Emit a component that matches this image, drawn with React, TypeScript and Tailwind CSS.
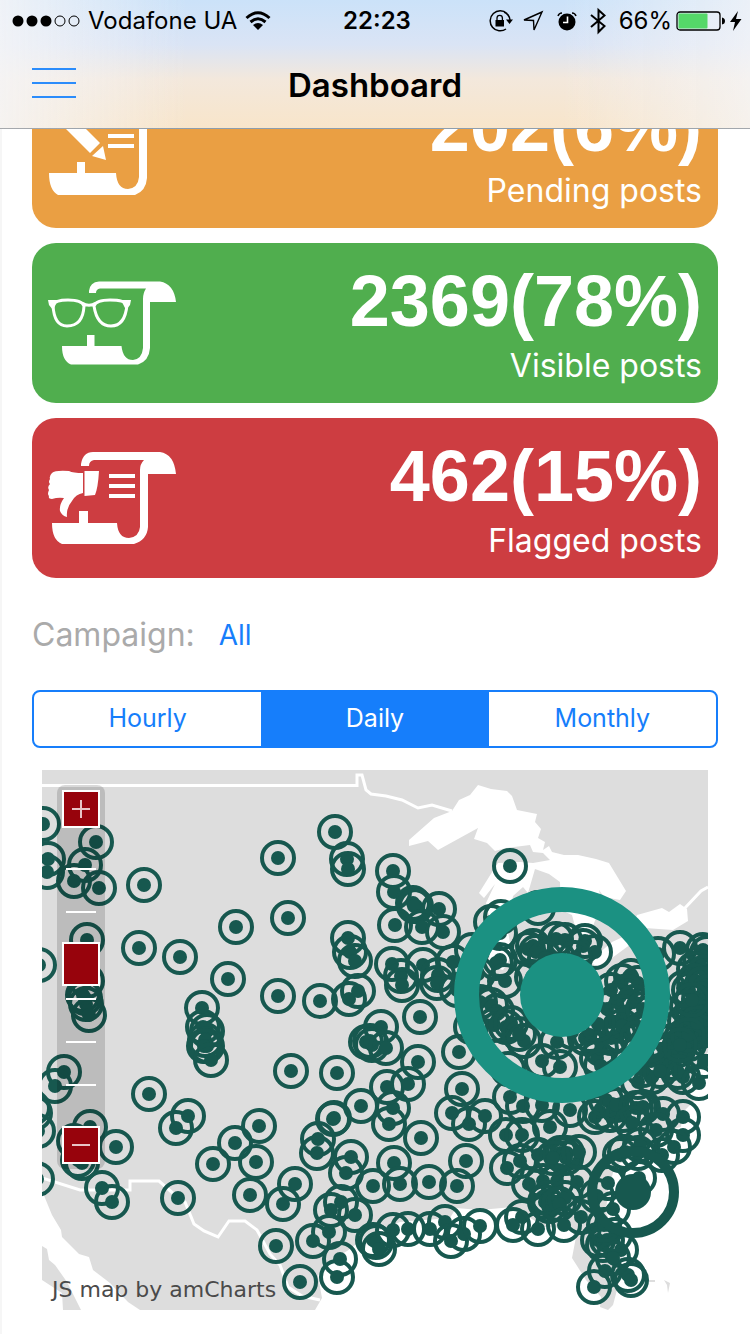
import { useState, type ReactNode } from 'react';

type Point = [number, number];

const WEST: Point[] = [
  [43, 824], [96, 842], [85, 865], [48, 859], [47, 872], [74, 881], [99, 888], [144, 885],
  [87, 940], [139, 948], [180, 957], [236, 927], [228, 979], [39, 965], [202, 1008], [203, 1027],
  [207, 1031], [205, 1040], [207, 1046], [204, 1046], [211, 1060], [87, 981], [83, 995], [86, 1004],
  [85, 998], [89, 1015], [64, 1072], [55, 1086], [33, 1108], [35, 1113], [38, 1131], [37, 1179],
  [90, 1127], [74, 1141], [82, 1163], [78, 1160], [116, 1147], [102, 1188], [112, 1202], [149, 1094],
  [188, 1116], [176, 1128], [178, 1198], [213, 1164], [235, 1143], [259, 1126], [256, 1162],
  [250, 1195], [276, 1246],
];

const CENTRAL: Point[] = [
  [278, 858], [335, 832], [347, 859], [348, 869], [288, 918], [393, 871], [394, 892], [413, 903],
  [416, 906], [414, 906], [439, 909], [395, 925], [422, 927], [443, 932], [348, 938], [350, 952],
  [355, 961], [278, 996], [320, 1001], [349, 999], [358, 991], [392, 964], [401, 976], [402, 985],
  [423, 965], [438, 975], [437, 983], [453, 962], [472, 950], [457, 990], [420, 1017],
  [381, 1027], [366, 1042], [372, 1045], [370, 1041], [386, 1048], [291, 1071], [337, 1073],
  [361, 1106], [333, 1119], [334, 1118], [318, 1139], [317, 1153], [351, 1157], [346, 1173],
  [295, 1184], [283, 1204], [373, 1186], [394, 1163], [400, 1184], [429, 1182], [457, 1186],
  [466, 1161], [341, 1202], [331, 1210], [355, 1215], [329, 1232], [313, 1241],
  [340, 1259], [337, 1277], [300, 1282], [373, 1240], [376, 1242], [379, 1249], [393, 1230],
  [408, 1229], [430, 1229], [445, 1222], [451, 1241], [464, 1234], [480, 1226], [421, 1138],
  [389, 1124], [393, 1108], [387, 1087], [408, 1084], [418, 1062], [459, 1052], [462, 1089],
  [452, 1113], [469, 1124], [485, 1116],
];

const LAKES: Point[] = [
  [510, 866], [501, 917], [491, 922], [538, 908], [500, 933], [528, 949], [533, 946],
  [536, 952], [556, 939], [565, 940], [585, 941], [583, 946], [595, 952],
  [575, 958], [545, 958], [500, 960], [496, 963], [505, 981], [478, 974], [532, 977],
  [480, 1002], [491, 1005], [497, 1011], [506, 1027], [494, 1025], [511, 1023], [524, 1041],
  [519, 1034], [542, 1061], [560, 1067], [557, 1042], [585, 1038], [572, 1032], [508, 1069],
  [597, 1058], [601, 1049], [590, 1035], [611, 1038], [619, 1035], [601, 1066],
  [611, 990], [622, 981], [631, 976], [638, 983], [627, 992], [616, 1001], [634, 1002],
  [607, 1009], [623, 1012], [610, 1022], [633, 1021], [622, 1026], [598, 1024], [643, 1009],
  [644, 1028], [471, 1027], [637, 1038],
];

const NORTHEAST: Point[] = [
  [680, 948], [658, 954], [703, 950], [707, 953], [683, 988], [689, 990], [700, 963], [694, 969],
  [705, 972], [694, 981], [702, 984], [708, 992], [699, 999], [687, 1007], [706, 1006], [693, 1014],
  [701, 1018], [685, 1021], [708, 1024], [677, 1028], [690, 1029], [699, 1032], [681, 1038],
  [672, 1041], [706, 1040], [689, 1044], [678, 1050], [668, 1052], [685, 1056], [661, 1060],
  [672, 1063], [651, 1061], [652, 1077], [638, 1082], [643, 1070], [683, 1077], [678, 1072],
  [699, 1083], [660, 1071], [650, 1045], [704, 1061], [697, 1023], [692, 1000], [688, 1035],
  [680, 1045],
];

const SOUTHEAST: Point[] = [
  [510, 1097], [523, 1106], [542, 1105], [570, 1110], [506, 1135], [522, 1135], [550, 1127],
  [507, 1168], [520, 1161], [538, 1155], [529, 1184], [543, 1181], [557, 1181], [577, 1182],
  [560, 1153], [563, 1154], [567, 1153], [566, 1158], [553, 1158], [579, 1152], [545, 1202],
  [549, 1206], [548, 1198], [565, 1198], [559, 1204], [581, 1217], [564, 1225], [538, 1229],
  [522, 1217], [513, 1225], [595, 1117], [600, 1112], [610, 1115], [606, 1100],
  [623, 1115], [616, 1105], [636, 1108], [640, 1108], [643, 1107], [632, 1123],
  [663, 1114], [683, 1117], [683, 1135], [656, 1130], [674, 1147], [662, 1155],
  [625, 1152], [620, 1155], [640, 1145], [638, 1153], [608, 1183],
  [613, 1209], [639, 1178], [598, 1240], [603, 1245], [607, 1240], [621, 1250], [605, 1271],
  [594, 1287], [628, 1275], [631, 1280], [615, 1235], [613, 1258],
  [604, 1225], [597, 1196],
];

const MARKERS: Point[] = [...WEST, ...CENTRAL, ...LAKES, ...NORTHEAST, ...SOUTHEAST];

function PendingIcon() {
  return (
    <svg viewBox="0 0 128 128" className="size-32 shrink-0 fill-white" aria-hidden="true">
      <path d="M31 32 V30 Q33 18 43 18 H112 Q126 20 128 40 H99 V94 Q98 107 87 111 H10 Q1 106 1 89 H29 V78 H37 V89 H68 Q69 105 80 105 Q90 104 91 93 V36 Q91 30 95 26 H44 Q39 27 39 32 Z" />
      <path d="M60 40h26v4H60zM60 50h26v4H60zM60 60h26v4H60zM8 35 L18 25 L52 59 L42 69 ZM55 62 L44 72 L58 76 Z" />
    </svg>
  );
}

function VisibleIcon() {
  return (
    <svg viewBox="0 0 128 128" className="size-32 shrink-0 fill-white" aria-hidden="true">
      <path d="M41 34 V32 Q42 23 51 22.5 H112 Q126 25 128 43 H102 V89 Q101 102 90 105.5 H23 Q14 102 14 87 H39 V76 H46.500 V87 H73.500 Q75 101 85 101 Q94 100 95 89 V40 Q95 34 98 29.500 H52 Q48 30 48 34 Z" />
      <path
        d="M5 46 Q7 41 20 41 Q34 41 36 47 Q35 67 19 67 Q6 67 5 46 ZM46 47 Q48 41 62 41 Q77 41 79 46 Q77 67 63 67 Q49 67 46 47 ZM34 44 Q41 48.500 48 44"
        className="fill-none stroke-white stroke-3"
      />
      <path d="M0 41 H10 L5 51 L1 46 ZM83 41 H73 L78 51 L82 46 Z" />
    </svg>
  );
}

function FlaggedIcon() {
  return (
    <svg viewBox="0 0 128 128" className="size-32 shrink-0 fill-white" aria-hidden="true">
      <path d="M33 32 V30 Q35 18 45 18 H112 Q126 20 128 40 H100 V93 Q99 106 86 110 H14 Q4 106 4 89 H31 V77 H40 V89 H69 Q70 104 81 104 Q91 103 92 93 V36 Q92 30 96 26 H46 Q41 27 41 32 Z" />
      <path d="M61 40h26v4H61zM61 50h26v4H61zM61 60h26v4H61zM36.500 37 H51 Q50 54 47 61 L36.500 62 Z" />
      <path d="M35 39 Q25 39 21 37 Q7 36 4 39 Q1 42 2 45 Q0 48 2 50 Q-1 53 1 56 Q-1 60 1 62 Q0 65 4 65 Q10 63 16 64 Q11 71 12 77 Q14 82 19 83 Q18 74 24 67 Q28 60 35 59 Z" />
    </svg>
  );
}

interface StatProps {
  tone: string;
  icon: ReactNode;
  value: string;
  label: string;
}

function StatCard({ tone, icon, value, label }: StatProps) {
  return (
    <section className={`flex h-40 items-start justify-between rounded-3xl px-4 pt-4 text-white ${tone}`}>
      {icon}
      <div className="text-right">
        <p className="font-['Liberation_Sans',Arial,sans-serif] text-[72px] leading-[84px] font-bold">{value}</p>
        <p className="text-[32px] leading-[46px]">{label}</p>
      </div>
    </section>
  );
}

function StatusBar() {
  return (
    <div className="grid h-[42px] grid-cols-[1fr_auto_1fr] items-center pr-2 pl-3 text-2xl">
      <div className="flex items-center gap-2">
        <svg viewBox="0 0 68 12" className="h-3 w-[68px]" aria-hidden="true">
          <circle cx="6" cy="6" r="5.500" />
          <circle cx="20" cy="6" r="5.500" />
          <circle cx="34" cy="6" r="5.500" />
          <circle cx="48" cy="6" r="5" fill="none" stroke="black" />
          <circle cx="62" cy="6" r="5" fill="none" stroke="black" />
        </svg>
        <span>Vodafone UA</span>
        <svg viewBox="0 0 26 20" className="h-5 w-[26px]" aria-hidden="true">
          <path d="M1.500 7 Q13 -3.500 24.500 7 M5.500 11 Q13 4.500 20.500 11" fill="none" stroke="black" strokeWidth="3" />
          <path d="M13 19 L8 14 Q13 10 18 14 Z" />
        </svg>
      </div>
      <time className="font-semibold">22:23</time>
      <div className="flex items-center justify-end gap-2">
        <svg viewBox="0 0 24 22" className="h-[22px] w-6" aria-hidden="true">
          <path d="M18 3.500 A10 10 0 1 0 17 19 M15 2 A10 10 0 0 1 21 10" fill="none" stroke="black" strokeWidth="1.500" />
          <path d="M17 9.500 H24 L20.500 14 ZM6.500 10 h8.500 v6.500 h-8.500 z" />
          <path d="M8 10 V8 a2.700 2.700 0 0 1 5.400 0 V10" fill="none" stroke="black" strokeWidth="1.300" />
        </svg>
        <svg viewBox="0 0 24 22" className="h-[22px] w-6" aria-hidden="true">
          <path d="M3 10 L21 2 L13 20 L12.500 10.500 Z" fill="none" stroke="black" strokeWidth="1.400" />
        </svg>
        <svg viewBox="0 0 20 20" className="ml-1 size-5" aria-hidden="true">
          <circle cx="10" cy="11" r="8.500" />
          <path d="M1 5 Q2 2 5 2 M15 2 Q18 2 19 5" fill="none" stroke="black" strokeWidth="1.500" />
          <path d="M10.500 5.500 V11.500 H6" fill="none" stroke="white" strokeWidth="1.600" />
        </svg>
        <svg viewBox="0 0 18 28" className="ml-1 h-7 w-[18px]" aria-hidden="true">
          <path d="M2 8 L15.500 19 L9.500 25 V3 L15.500 8.500 L2 20" fill="none" stroke="black" strokeWidth="2" />
        </svg>
        <span className="ml-1">66%</span>
        <svg viewBox="0 0 66 22" className="-ml-1 h-[22px] w-[66px]" aria-hidden="true">
          <rect x="1" y="2" width="43" height="18" rx="3" fill="none" stroke="black" strokeWidth="1.300" />
          <rect x="2.500" y="3.500" width="29" height="15" rx="1" fill="#55d869" />
          <path d="M46 7.500 Q49 8 49 11 Q49 14 46 14.500 ZM62 1 L54 12 H59 L57 21 L65.500 9 H60 Z" />
        </svg>
      </div>
    </div>
  );
}

function ZoomPanel() {
  const [zoom, setZoom] = useState(45);
  const box = 'flex size-[38px] items-center justify-center border-2 border-white bg-[#97030c]';
  return (
    <div className="absolute top-[15px] left-[15px] flex w-12 flex-col items-center rounded-lg bg-black/15 py-[5px]">
      <button type="button" aria-label="Zoom in" className={box} onClick={() => setZoom(Math.max(0, zoom - 10))}>
        <svg viewBox="0 0 18 18" className="size-[18px] stroke-[#e8c4c6] stroke-2" aria-hidden="true">
          <path d="M9 0v18M0 9h18" />
        </svg>
      </button>
      <div className="relative h-[298px] w-[38px]">
        <div className="absolute inset-x-1 top-10 flex h-[218px] flex-col justify-between">
          {[0, 1, 2, 3, 4, 5].map((tick) => (
            <span key={tick} className="h-[2px] bg-white" />
          ))}
        </div>
        <input
          type="range"
          aria-label="Map zoom"
          min={0}
          max={100}
          value={zoom}
          onChange={(event) => setZoom(Number(event.target.value))}
          className="relative block h-full w-[38px] appearance-none bg-transparent [writing-mode:vertical-lr] [&::-webkit-slider-thumb]:h-11 [&::-webkit-slider-thumb]:w-[38px] [&::-webkit-slider-thumb]:appearance-none [&::-webkit-slider-thumb]:border-2 [&::-webkit-slider-thumb]:border-solid [&::-webkit-slider-thumb]:border-white [&::-webkit-slider-thumb]:bg-[#97030c]"
        />
      </div>
      <button type="button" aria-label="Zoom out" className={box} onClick={() => setZoom(Math.min(100, zoom + 10))}>
        <svg viewBox="0 0 18 18" className="size-[18px] stroke-[#e8c4c6] stroke-2" aria-hidden="true">
          <path d="M0 9h18" />
        </svg>
      </button>
    </div>
  );
}

function PostMap() {
  return (
    <div className="relative mx-[10px] mt-[22px]">
      <svg viewBox="42 770 666 540" className="block w-full" role="img" aria-label="Map of posts">
        <rect x="42" y="770" width="666" height="540" fill="#ddd" />
        <g fill="white">
          <path d="M409 846 V840 L434 818 L452 811 L459 800 L470 795 L478 785 L491 789 L507 791 L512 796 L517 810 L537 814 L535 822 L541 829 L538 838 L545 842 L543 850 L549 846 L552 852 L564 855 L578 855 L596 859 L609 863 L626 891 L620 900 L604 897 L599 890 L602 904 L592 928 L586 936 L577 934 L572 915 L561 910 L560 882 L549 874 L535 869 L528 893 L523 887 L513 896 L507 925 L512 955 L503 970 L489 966 L491 925 L486 903 L495 884 L484 898 L479 893 L494 869 L498 863 L520 862 L533 863 L550 860 L543 853 L533 852 L530 845 L506 848 L495 851 L487 843 L474 839 L478 828 L438 850 L428 841 Z" />
          <path d="M637 915 L662 908 L669 912 L680 904 L687 909 L688 921 L673 930 L645 928 L631 944 L612 958 L598 966 L592 964 L598 954 L612 942 L625 936 L632 928 Z" />
          <path d="M708 1052 L692 1078 L688 1098 L694 1101 L683 1112 L681 1127 L667 1131 L646 1148 L637 1155 L615 1166 L608 1190 L606 1212 L622 1252 L621 1275 L613 1305 L608 1310 L600 1307 L601 1297 L586 1280 L572 1258 L576 1237 L568 1228 L545 1227 L512 1207 L480 1210 L456 1208 L450 1218 L400 1222 L370 1234 L347 1251 L324 1264 L318 1276 L322 1298 L315 1310 H708 Z" />
          <path d="M42 1190 L45 1198 L52 1215 L61 1230 L62 1237 L79 1254 L89 1257 L93 1270 L110 1283 L128 1302 L140 1310 H81 L67 1282 L55 1265 L49 1260 L47 1249 L42 1246 ZM42 1280 L62 1293 L63 1310 H42 Z" />
        </g>
        <path d="M649 1280h6v2h-6zM664 1280 L670 1283 L668 1293 L667 1285 Z" fill="#ddd" />
        <path
          d="M42 785.500 H357 V775 H362 L366 790 L371 794 L386 796 L402 800 L418 808 L432 805 L452 811 M42 1178 L80 1190 H130 V1181 H159 L175 1195 L185 1202 L194 1224 L204 1231 L218 1237 L229 1221 H245 L257 1230 L270 1254 L280 1265 L288 1287 L302 1296 L320 1300 M684 909 L701 891 L708 887"
          fill="none"
          stroke="white"
          strokeWidth="3"
        />
        <g>
          {MARKERS.map(([x, y], index) => (
            <g key={index}>
              <circle cx={x} cy={y} r="16" fill="none" stroke="#17584f" strokeWidth="4" />
              <circle cx={x} cy={y} r="7" fill="#17584f" />
            </g>
          ))}
        </g>
        <circle cx="633" cy="1192" r="41" fill="none" stroke="#17584f" strokeWidth="10" />
        <circle cx="633" cy="1192" r="18" fill="#17584f" />
        <circle cx="562" cy="995" r="95.500" fill="none" stroke="#1b9182" strokeWidth="25" />
        <circle cx="562" cy="995" r="42" fill="#1b9182" />
      </svg>
      <ZoomPanel />
      <a
        href="#amcharts"
        className="absolute bottom-1 left-[10px] font-['DejaVu_Sans',Verdana,sans-serif] text-[22px] leading-8 text-[#4a4a4a]"
      >
        JS map by amCharts
      </a>
    </div>
  );
}

const PERIODS = ['Hourly', 'Daily', 'Monthly'];

export default function App() {
  const [period, setPeriod] = useState('Daily');
  return (
    <div className="min-h-screen border-l-2 border-[#f6f6f6] bg-white font-['Inter',sans-serif] text-black">
      <header className="fixed inset-x-0 top-0 z-10 h-[129px] border-b border-black/30 bg-[#f8e8d2] bg-[linear-gradient(90deg,rgba(245,245,247,.85),rgba(245,245,247,0)_25%,rgba(245,245,247,0)_75%,rgba(245,245,247,.75)),linear-gradient(180deg,#cbe2f9,#dae4f5_35%,#f3e8dc_62%,#f8e5ca)]">
        <StatusBar />
        <div className="grid h-[86px] grid-cols-[1fr_auto_1fr] items-center px-8">
          <button type="button" aria-label="Menu" className="flex h-[34px] w-11 flex-col justify-between pb-1">
            <span className="h-0.5 w-full bg-[#2b8cfb]" />
            <span className="h-0.5 w-full bg-[#2b8cfb]" />
            <span className="h-0.5 w-full bg-[#2b8cfb]" />
          </button>
          <h1 className="text-[33px] leading-10 font-semibold">Dashboard</h1>
        </div>
      </header>

      <main className="pt-[68px] pr-8 pb-6 pl-[30px]">
        <div className="flex flex-col gap-[15px]">
          <StatCard tone="bg-[#ea9f43]" icon={<PendingIcon />} value="202(6%)" label="Pending posts" />
          <StatCard tone="bg-[#50ae4e]" icon={<VisibleIcon />} value="2369(78%)" label="Visible posts" />
          <StatCard tone="bg-[#cd3d41]" icon={<FlaggedIcon />} value="462(15%)" label="Flagged posts" />
        </div>

        <div className="mt-8 flex h-[50px] items-center gap-6">
          <span id="campaign" className="text-[32px] text-[#aaa]">Campaign:</span>
          <button type="button" aria-labelledby="campaign campaign-value" className="text-[28px] text-[#167efb]">
            <span id="campaign-value">All</span>
          </button>
        </div>

        <div className="mt-[30px] flex h-[58px] overflow-hidden rounded-lg border-2 border-[#167efb]">
          {PERIODS.map((name) => (
            <button
              key={name}
              type="button"
              aria-pressed={name === period}
              onClick={() => setPeriod(name)}
              className={`flex-1 text-[25px] ${name === period ? 'bg-[#167efb] text-white' : 'text-[#167efb]'}`}
            >
              {name}
            </button>
          ))}
        </div>

        <PostMap />
      </main>
    </div>
  );
}
